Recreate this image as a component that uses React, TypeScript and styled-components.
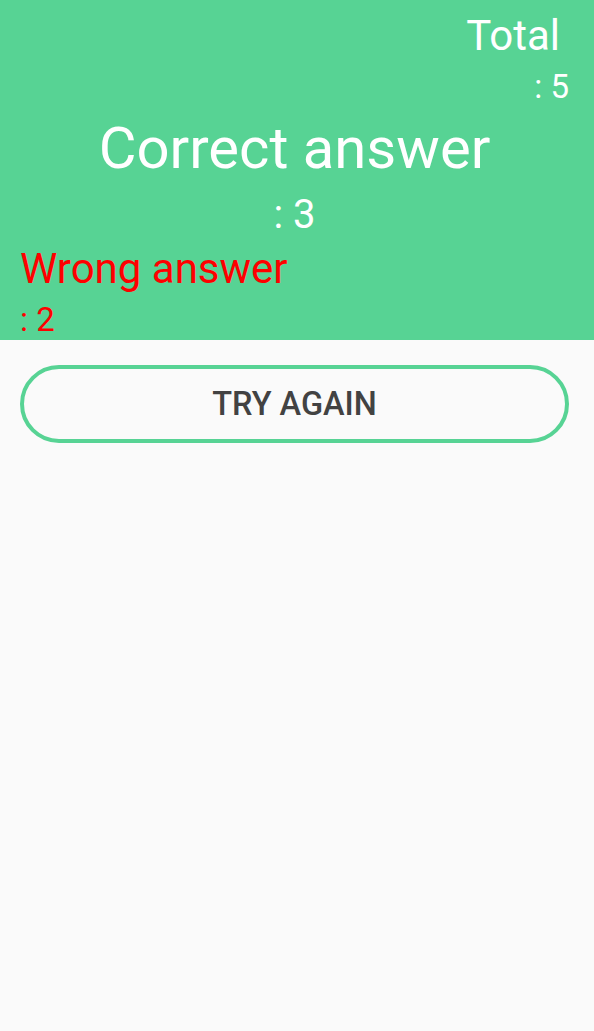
import React from "react";
import styled, { createGlobalStyle } from "styled-components";

const Global = createGlobalStyle`
  html, body { margin: 0; padding: 0; background: #fafafa; }
  body { font-family: Roboto, "Noto Sans", sans-serif; }
`;

const Page = styled.div`
  width: 594px;
  min-height: 1031px;
  background: #fafafa;
  display: flex;
  flex-direction: column;
`;

const Header = styled.header`
  background: #57d394;
  height: 340px;
  box-sizing: border-box;
  padding: 10px 0 0 20px;
  display: flex;
  flex-direction: column;
  overflow: hidden;
`;

type Align = "left" | "center" | "right";

const Label = styled.div<{
  $size: number;
  $lh: number;
  $color: string;
  $align: Align;
  $pr?: number;
  $mt?: number;
}>`
  font-size: ${(p) => p.$size}px;
  line-height: ${(p) => p.$lh}px;
  height: ${(p) => p.$lh}px;
  color: ${(p) => p.$color};
  text-align: ${(p) => p.$align};
  padding-right: ${(p) => p.$pr ?? 0}px;
  margin-top: ${(p) => p.$mt ?? 0}px;
  font-weight: 400;
  white-space: nowrap;
`;

const Body = styled.main`
  padding: 25px 25px 0 20px;
`;

const Button = styled.button`
  display: block;
  width: 100%;
  height: 78px;
  border: 4px solid #57d394;
  border-radius: 39px;
  background: #fafafa;
  font-family: Roboto, sans-serif;
  font-weight: 500;
  font-size: 32.5px;
  color: #424242;
  box-sizing: border-box;
  padding: 0;
`;

const WHITE = "#ffffff";
const RED = "#ff0000";

export default function App() {
  return (
    <Page>
      <Global />
      <Header>
        <Label $size={42} $lh={51} $color={WHITE} $align="right" $pr={34}>Total</Label>
        <Label $size={33} $lh={51} $color={WHITE} $align="right" $pr={25}>: 5</Label>
        <Label $size={58} $lh={72} $color={WHITE} $align="center" $pr={25}>Correct answer</Label>
        <Label $size={40} $lh={61} $color={WHITE} $align="center" $pr={25}>: 3</Label>
        <Label $size={42} $lh={47} $color={RED} $align="left">Wrong answer</Label>
        <Label $size={33} $lh={40} $color={RED} $align="left" $mt={8}>: 2</Label>
      </Header>
      <Body>
        <Button>TRY AGAIN</Button>
      </Body>
    </Page>
  );
}
